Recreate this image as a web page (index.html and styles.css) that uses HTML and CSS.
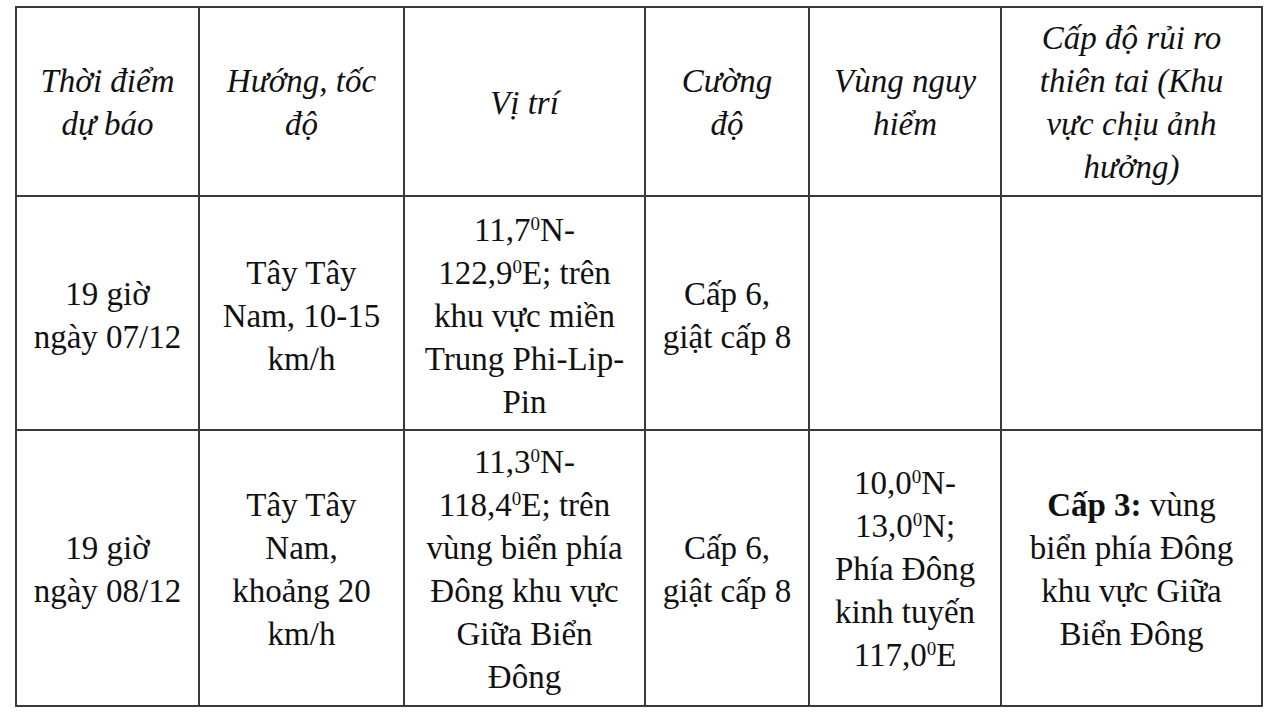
FILE: index.html
```html
<!DOCTYPE html>
<html lang="vi">
<head>
<meta charset="utf-8">
<link rel="stylesheet" href="styles.css">
</head>
<body>
<table class="fc">
  <colgroup>
    <col class="c1"><col class="c2"><col class="c3"><col class="c4"><col class="c5"><col class="c6">
  </colgroup>
  <tr class="head">
    <th>Thời điểm<br>dự báo</th>
    <th>Hướng, tốc<br>độ</th>
    <th>Vị trí</th>
    <th>Cường<br>độ</th>
    <th>Vùng nguy<br>hiểm</th>
    <th>Cấp độ rủi ro<br>thiên tai (Khu<br>vực chịu ảnh<br>hưởng)</th>
  </tr>
  <tr class="r1">
    <td>19 giờ<br>ngày 07/12</td>
    <td>Tây Tây<br>Nam, 10-15<br>km/h</td>
    <td>11,7<span class="sup">0</span>N-<br>122,9<span class="sup">0</span>E; trên<br>khu vực miền<br>Trung Phi-Lip-<br>Pin</td>
    <td>Cấp 6,<br>giật cấp 8</td>
    <td></td>
    <td></td>
  </tr>
  <tr class="r2">
    <td>19 giờ<br>ngày 08/12</td>
    <td>Tây Tây<br>Nam,<br>khoảng 20<br>km/h</td>
    <td>11,3<span class="sup">0</span>N-<br>118,4<span class="sup">0</span>E; trên<br>vùng biển phía<br>Đông khu vực<br>Giữa Biển<br>Đông</td>
    <td>Cấp 6,<br>giật cấp 8</td>
    <td>10,0<span class="sup">0</span>N-<br>13,0<span class="sup">0</span>N;<br>Phía Đông<br>kinh tuyến<br>117,0<span class="sup">0</span>E</td>
    <td><b>Cấp 3:</b> vùng<br>biển phía Đông<br>khu vực Giữa<br>Biển Đông</td>
  </tr>
</table>
</body>
</html>
```

FILE: styles.css
```css
html, body {
  margin: 0;
  padding: 0;
  background: #ffffff;
}

body {
  padding: 6px 0 0 15px;
  color: #111111;
  font-family: "Liberation Serif", "Times New Roman", serif;
}

.fc {
  border-collapse: collapse;
  table-layout: fixed;
  width: 1248px;
}

.c1 { width: 183px; }
.c2 { width: 205px; }
.c3 { width: 241px; }
.c4 { width: 164px; }
.c5 { width: 192px; }
.c6 { width: 261px; }

.fc th,
.fc td {
  border: 2px solid #3a3a3a;
  padding: 3px 0 0 0;
  text-align: center;
  vertical-align: middle;
  white-space: nowrap;
  font-family: "Liberation Serif", "Times New Roman", serif;
  font-size: 33px;
  line-height: 43px;
  color: #111111;
}

.fc th {
  font-weight: normal;
  font-style: italic;
}

.head { height: 189px; }
.r1 { height: 234px; }
.r2 { height: 276px; }

.r1 td { padding-top: 6px; }

.sup {
  font-size: 19px;
  line-height: 0;
  vertical-align: 11px;
}

.fc b {
  font-weight: bold;
}
```
